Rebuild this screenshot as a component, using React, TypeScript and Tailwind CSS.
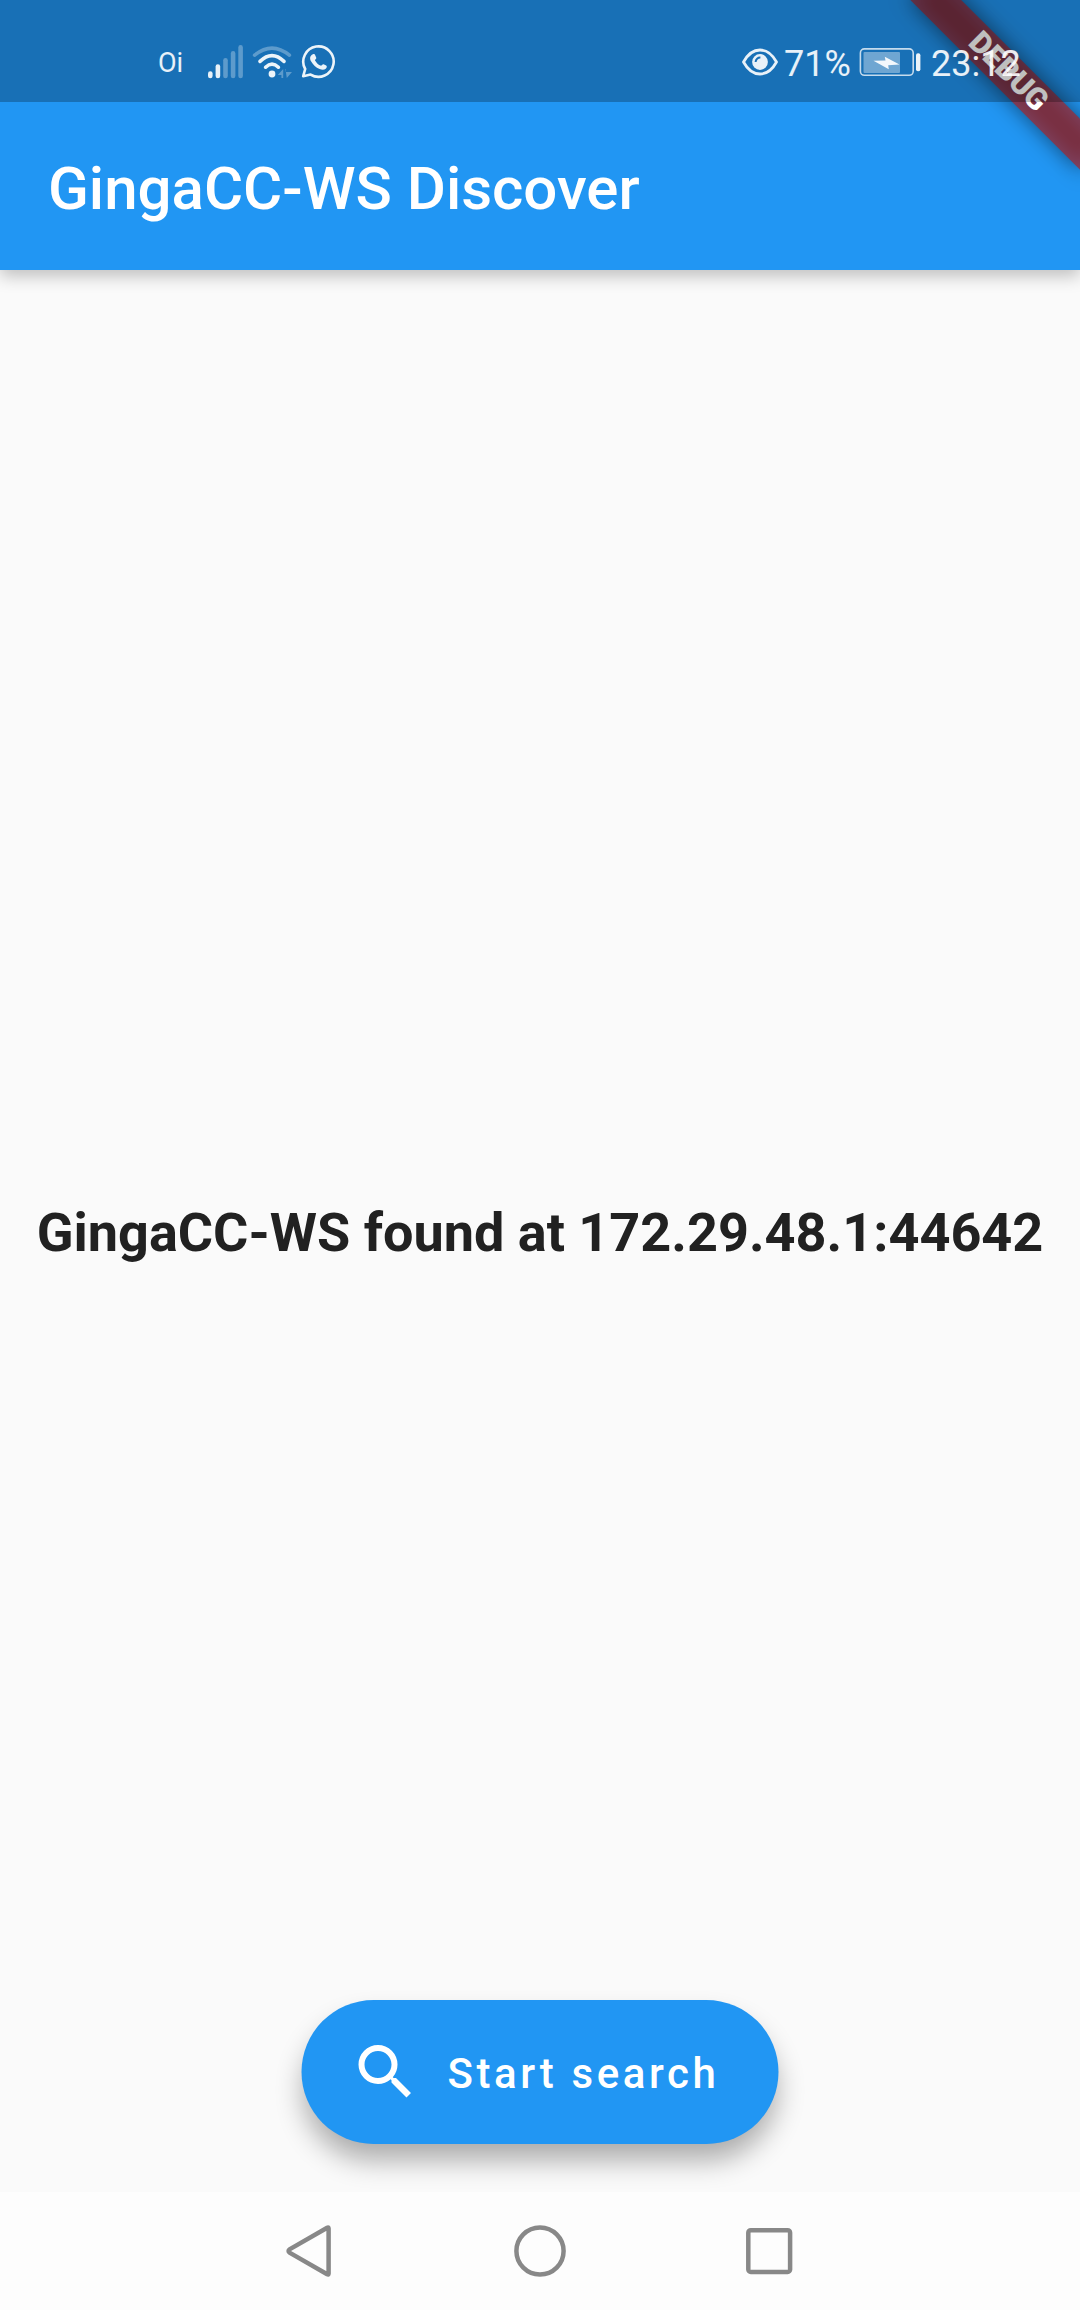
function SignalIcon() {
  return (
    <svg className="mb-[2px] h-[36px] w-[36px]" viewBox="0 0 36 36" stroke="#fff" strokeWidth="4.6" strokeLinecap="round">
      <g strokeOpacity="0.9">
        <path d="M3.3 29.6V31.9" />
        <path d="M10.9 22.6V31.9" />
      </g>
      <g strokeOpacity="0.3">
        <path d="M18.5 16.2V31.9" />
        <path d="M26.1 9.4V31.9" />
        <path d="M33.6 3.4V31.9" />
      </g>
    </svg>
  );
}

function WifiIcon() {
  return (
    <svg className="mb-[2px] h-[36px] w-[40px]" viewBox="0 0 40 36" fill="none" stroke="#fff" strokeWidth="3.6" strokeLinecap="round">
      <path d="M2.6 11.2Q20 -3 37.4 11.2" strokeOpacity="0.3" />
      <path d="M8 17.4Q20 5.8 32 17.4" strokeOpacity="0.92" />
      <path d="M13.6 23.2Q20 17 26.4 23.2" strokeOpacity="0.92" />
      <circle cx="20" cy="30" r="3.4" fill="#fff" fillOpacity="0.92" stroke="none" />
      <path d="M25.8 31L31.2 25V34H29.4V31ZM34 25V28H40L34.8 34L33.4 25Z" fill="#fff" fillOpacity="0.3" stroke="none" />
    </svg>
  );
}

function WhatsAppIcon() {
  return (
    <svg className="mb-[2px] h-[36px] w-[36px]" viewBox="0 0 36 36" fill="none">
      <path
        d="M3.2 32.2L5.2 25A15.2 15.2 0 1 1 10.6 30.600Z"
        stroke="#fff"
        strokeOpacity="0.92"
        strokeWidth="2.6"
        strokeLinejoin="round"
      />
      <path
        d="M12.9 10.2C14.3 9.6 14.8 10.2 15.3 11.4L16.2 13.6C16.5 14.5 15.9 15.1 14.9 16.2C16.4 18.9 18.3 20.7 21.1 21.8C22.2 20.9 22.6 19.9 23.6 20.2L26.2 21.5C27.3 22.1 26.8 23.8 25.7 24.7C24.2 26 22.1 26 19.6 25C15.8 23.4 13.2 20.9 11 17.2C9.4 14.2 10.1 11.4 12.9 10.2Z"
        fill="#fff"
        fillOpacity="0.92"
      />
    </svg>
  );
}

function EyeIcon() {
  return (
    <svg className="mb-[2px] h-[30px] w-[38px]" viewBox="0 0 38 30" fill="none">
      <path
        d="M2.5 15C7 6.8 12.6 3 19 3S31 6.8 35.5 15C31 23.2 25.4 27 19 27S7 23.2 2.5 15Z"
        stroke="#fff"
        strokeOpacity="0.9"
        strokeWidth="2.8"
        strokeLinejoin="round"
      />
      <circle cx="19" cy="15" r="7.9" fill="#fff" fillOpacity="0.9" />
      <path d="M14.6 15A4.6 4.6 0 0 1 19.4 10.6" stroke="#1a70b6" strokeWidth="2" />
    </svg>
  );
}

function BatteryIcon() {
  return (
    <svg className="mb-[2px] h-[30px] w-[64px]" viewBox="0 0 64 30" fill="none">
      <rect x="1.4" y="1.9" width="52.8" height="26.4" rx="4" stroke="#fff" strokeOpacity="0.75" strokeWidth="1.6" />
      <rect x="4.5" y="5" width="36.5" height="21" rx="1" fill="#fff" fillOpacity="0.38" />
      <path d="M14.5 13.8L26.5 13.4L25.8 9.8L40.5 17.5L29.2 18.2L29.8 22.3Z" fill="#fff" fillOpacity="0.92" />
      <rect x="57" y="6.2" width="4.4" height="18" rx="2" fill="#fff" fillOpacity="0.92" />
    </svg>
  );
}

function DebugBanner() {
  return (
    <div className="pointer-events-none absolute top-0 right-0 z-20 h-[270px] w-[270px] overflow-hidden">
      <div className="absolute top-0 left-[270px] h-0 w-0 rotate-45">
        <div className="absolute top-[84px] left-[-120px] h-[36px] w-[240px] bg-black/50 blur-[10.9px]" />
        <div className="absolute top-[84px] left-[-120px] flex h-[36px] w-[240px] items-center justify-center bg-[#b71c1ca0] pb-[2px] text-[30.6px] leading-none font-black text-white">
          DEBUG
        </div>
      </div>
    </div>
  );
}

function StatusBar() {
  return (
    <div className="absolute inset-x-0 top-0 z-30 flex h-[102px] items-center bg-black/25 pt-[24px] pl-[158px] text-white/90">
      <span className="w-[49px] text-[27px] leading-none">Oi</span>
      <SignalIcon />
      <div className="ml-[9px] flex">
        <WifiIcon />
      </div>
      <div className="ml-[8px] flex">
        <WhatsAppIcon />
      </div>
      <div className="ml-auto flex items-center pr-[60px]">
        <EyeIcon />
        <span className="ml-[5px] w-[75px] pt-[2px] text-[36px] leading-none">71%</span>
        <BatteryIcon />
        <span className="ml-[8px] w-[89px] pt-[2px] text-[36px] leading-none">23:12</span>
      </div>
    </div>
  );
}

export default function App() {
  return (
    <div className="relative flex h-[2310px] w-[1080px] flex-col overflow-hidden bg-[#fafafa] font-[Roboto,sans-serif]">
      <header className="z-10 flex h-[270px] shrink-0 items-center bg-[#2196f3] px-[48px] pt-[108px] shadow-[0_6px_16px_rgba(0,0,0,0.24)]">
        <h1 className="text-[60px] leading-none font-medium whitespace-nowrap text-white">GingaCC-WS Discover</h1>
      </header>

      <main className="relative flex flex-1 flex-col items-center justify-center overflow-hidden pt-1">
        <p className="text-[54px] leading-none font-bold whitespace-nowrap text-[#212121]">
          GingaCC-WS found at 172.29.48.1:44642
        </p>
        <button className="absolute bottom-[48px] left-1/2 flex h-[144px] w-[477px] -translate-x-1/2 items-center rounded-full bg-[#2196f3] pl-[48px] text-white shadow-[0_18px_28px_-2px_rgba(0,0,0,0.32)]">
          <svg className="h-[72px] w-[72px]" viewBox="0 0 24 24" fill="currentColor">
            <path d="M15.5 14h-.79l-.28-.27A6.471 6.471 0 0 0 16 9.5 6.5 6.5 0 1 0 9.5 16c1.61 0 3.09-.59 4.23-1.57l.27.28v.79l5 4.99L20.49 19l-4.99-5zm-6 0C7.01 14 5 11.99 5 9.5S7.01 5 9.5 5 14 7.01 14 9.5 11.99 14 9.5 14z" />
          </svg>
          <span className="ml-[26px] pt-[3px] text-[42px] leading-none font-medium tracking-[3.6px] whitespace-nowrap">
            Start search
          </span>
        </button>
      </main>

      <nav className="flex h-[118px] shrink-0 items-center justify-center gap-[174px] bg-[#fdfdfd]">
        <svg className="h-[56px] w-[56px]" viewBox="0 0 56 56" fill="none" stroke="#888" strokeWidth="4.5" strokeLinejoin="round">
          <path d="M46.6 5.5V50.5Q46.6 52 45.2 51.3L7.5 29.6Q5.6 28 7.5 26.4L45.2 4.7Q46.6 4 46.6 5.5Z" />
        </svg>
        <svg className="h-[56px] w-[56px]" viewBox="0 0 56 56" fill="none" stroke="#888" strokeWidth="4.5">
          <circle cx="28" cy="28" r="23.6" />
        </svg>
        <svg className="h-[56px] w-[56px]" viewBox="0 0 56 56" fill="none" stroke="#888" strokeWidth="4.5">
          <rect x="6.3" y="7.2" width="41.8" height="41.8" rx="2.5" />
        </svg>
      </nav>

      <DebugBanner />
      <StatusBar />
    </div>
  );
}
